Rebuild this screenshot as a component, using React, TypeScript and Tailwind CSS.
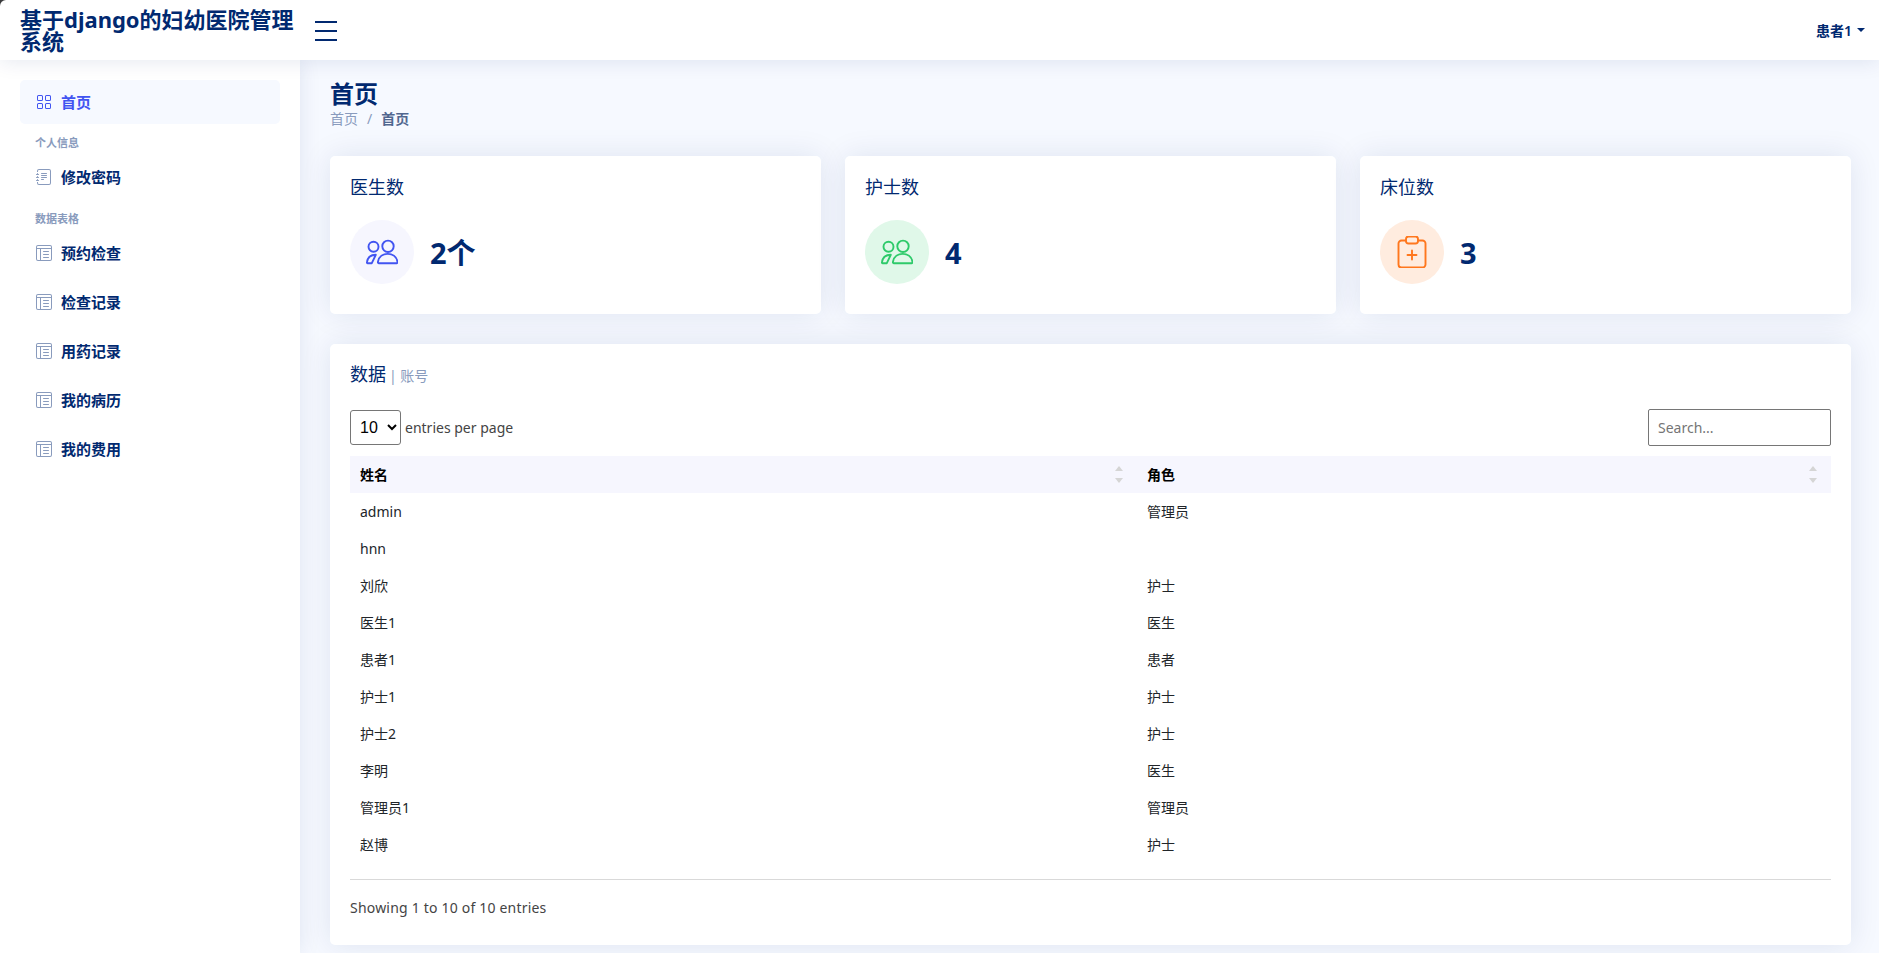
import { BsGrid, BsJournalText, BsLayoutTextWindowReverse } from 'react-icons/bs';

const navNames = ['预约检查', '检查记录', '用药记录', '我的病历', '我的费用'];

const rows = [
  ['admin', '管理员'],
  ['hnn', ''],
  ['刘欣', '护士'],
  ['医生1', '医生'],
  ['患者1', '患者'],
  ['护士1', '护士'],
  ['护士2', '护士'],
  ['李明', '医生'],
  ['管理员1', '管理员'],
  ['赵博', '护士'],
];

function PeopleIcon({ color }: { color: string }) {
  return (
    <svg width="32" height="32" viewBox="0 0 32 32" fill="none" stroke={color} strokeWidth="1.9" strokeLinejoin="round">
      <circle cx="7.5" cy="10.7" r="5" />
      <circle cx="22" cy="10.3" r="5.7" />
      <path d="M12.7 27.2C11.9 27.2 11.8 26.6 12 25.6 12.9 20.6 17.2 17.9 21.7 17.9S30.5 20.6 31.4 25.6C31.6 26.6 31.4 27.2 30.7 27.2Z" />
      <path d="M1.7 27.2C1 27.2.8 26.7 1 25.8 1.8 21.6 4.8 18.8 9.8 18.8L5.8 27.2Z" />
    </svg>
  );
}

function ClipboardIcon({ color }: { color: string }) {
  return (
    <svg width="32" height="32" viewBox="0 0 32 32" fill="none" stroke={color} strokeWidth="1.9" strokeLinecap="round">
      <path d="M9.5 4.5H5.5a3 3 0 0 0-3 3V28.5a3 3 0 0 0 3 3H26.5a3 3 0 0 0 3-3V7.5a3 3 0 0 0-3-3H22.5" />
      <rect x="10" y="0.5" width="12" height="7" rx="2.5" />
      <path d="M16 14.5V23.5M11.5 19H20.5" />
    </svg>
  );
}

function SortArrows() {
  return (
    <span className="flex flex-col gap-[7px]">
      <span className="w-0 h-0 border-x-[4px] border-x-transparent border-b-[5px] border-b-[#d5d5d5]" />
      <span className="w-0 h-0 border-x-[4px] border-x-transparent border-t-[5px] border-t-[#d5d5d5]" />
    </span>
  );
}

function StatCard({ title, value, circle, icon }: { title: string; value: string; circle: string; icon: React.ReactNode }) {
  return (
    <div className="flex-1 h-[158px] bg-white rounded-[5px] shadow-[0_0_30px_rgba(1,41,112,0.1)] px-5 pt-5">
      <h5 className="text-[18px] leading-[22px] text-[#012970]">{title}</h5>
      <div className="flex items-center mt-[22px]">
        <div className={`w-16 h-16 rounded-full flex items-center justify-center ${circle}`}>{icon}</div>
        <div className="pl-4 text-[29px] font-bold text-[#012970] leading-[34px] mt-[2px]">{value}</div>
      </div>
    </div>
  );
}

export default function App() {
  return (
    <div className="h-screen overflow-hidden bg-[#3c3c3c] font-['Noto_Sans','Noto_Sans_CJK_SC',sans-serif] flex flex-col">
      <header className="relative z-10 h-[60px] shrink-0 bg-white rounded-tl-[6px] shadow-[0_2px_20px_rgba(1,41,112,0.1)] flex items-center pl-5 pr-[14px]">
        <div className="w-[280px] text-[22px] font-bold leading-[22px] text-[#012970]">基于django的妇幼医院管理系统</div>
        <div className="ml-[15px] w-[22px] flex flex-col gap-[7px] mt-[1px]">
          <span className="h-[2px] bg-[#012970]" />
          <span className="h-[2px] bg-[#012970]" />
          <span className="h-[2px] bg-[#012970]" />
        </div>
        <div className="ml-auto flex items-center text-[14px] font-semibold text-[#012970]">
          患者1
          <span className="ml-[5px] w-0 h-0 border-x-[4px] border-x-transparent border-t-[4px] border-t-[#012970]" />
        </div>
      </header>

      <div className="flex flex-1 min-h-0 bg-[#f6f9ff]">
        <aside className="w-[300px] shrink-0 bg-white shadow-[0_0_20px_rgba(1,41,112,0.1)] p-5">
          <div className="h-11 flex items-center rounded-[5px] bg-[#f6f9ff] pl-4 text-[15px] font-semibold text-[#4154f1]">
            <BsGrid size={16} className="mr-[9px]" />
            首页
          </div>
          <div className="mt-3 pl-[15px] text-[11px] leading-[14px] font-semibold text-[#899bbd]">个人信息</div>
          <div className="mt-[5px] h-11 flex items-center pl-4 text-[15px] font-semibold text-[#012970]">
            <BsJournalText size={16} className="mr-[9px] text-[#899bbd]" />
            修改密码
          </div>
          <div className="mt-[13px] pl-[15px] text-[11px] leading-[14px] font-semibold text-[#899bbd]">数据表格</div>
          <div className="mt-[5px] flex flex-col gap-[5px]">
            {navNames.map((name) => (
              <div key={name} className="h-11 flex items-center pl-4 text-[15px] font-semibold text-[#012970]">
                <BsLayoutTextWindowReverse size={16} className="mr-[9px] text-[#899bbd]" />
                {name}
              </div>
            ))}
          </div>
        </aside>

        <main className="flex-1 min-w-0 pl-[30px] pr-7 pt-[19px]">
          <h1 className="text-[24px] leading-[30px] font-semibold text-[#012970]">首页</h1>
          <div className="flex items-center text-[14px] leading-[20px] text-[#899bbd]">
            首页
            <span className="mx-[9px]">/</span>
            <span className="text-[#51678f] font-semibold">首页</span>
          </div>
          <div className="flex gap-6 mt-[27px]">
            <StatCard title="医生数" value="2个" circle="bg-[#f6f6fe]" icon={<PeopleIcon color="#4154f1" />} />
            <StatCard title="护士数" value="4" circle="bg-[#e0f8e9]" icon={<PeopleIcon color="#2eca6a" />} />
            <StatCard title="床位数" value="3" circle="bg-[#ffecdf]" icon={<ClipboardIcon color="#ff771d" />} />
          </div>

          <section className="mt-[30px] h-[601px] bg-white rounded-[5px] shadow-[0_0_30px_rgba(1,41,112,0.1)] px-5 pt-[19px]">
            <h5 className="text-[18px] leading-[22px] text-[#012970]">
              数据<span className="ml-[3px] text-[14px] text-[#899bbd]">| 账号</span>
            </h5>
            <div className="flex items-center justify-between mt-[22px]">
              <div className="flex items-center text-[14px] text-[#444444]">
                <select className="w-[51px] h-[35px] pl-[5px] border border-[#767676] rounded-[3px] text-[16px] text-black bg-white font-['Liberation_Sans',sans-serif]" defaultValue="10">
                  <option value="10">10</option>
                </select>
                <span className="ml-[4px]">entries per page</span>
              </div>
              <input className="w-[183px] h-[37px] px-[9px] border border-[#767676] rounded-[2px] text-[14px] placeholder:text-[#757575]" placeholder="Search..." />
            </div>
            <table className="w-full table-fixed mt-[10px] text-[14px] text-[#212529]">
              <colgroup>
                <col className="w-[787px]" />
                <col />
              </colgroup>
              <thead>
                <tr className="h-[37px] bg-[#f6f6fe] text-black">
                  <th className="px-[10px] text-left font-semibold">
                    <div className="flex items-center justify-between pr-[4px]">姓名<SortArrows /></div>
                  </th>
                  <th className="px-[10px] text-left font-semibold">
                    <div className="flex items-center justify-between pr-[4px]">角色<SortArrows /></div>
                  </th>
                </tr>
              </thead>
              <tbody>
                {rows.map(([name, role]) => (
                  <tr key={name} className="h-[37px]">
                    <td className="px-[10px]">{name}</td>
                    <td className="px-[10px]">{role}</td>
                  </tr>
                ))}
              </tbody>
            </table>
            <div className="mt-4 border-t border-[#d9d9d9] pt-[18px] text-[14px] leading-[20px] tracking-[0.2px] text-[#444444]">
              Showing 1 to 10 of 10 entries
            </div>
          </section>
        </main>
      </div>
    </div>
  );
}
